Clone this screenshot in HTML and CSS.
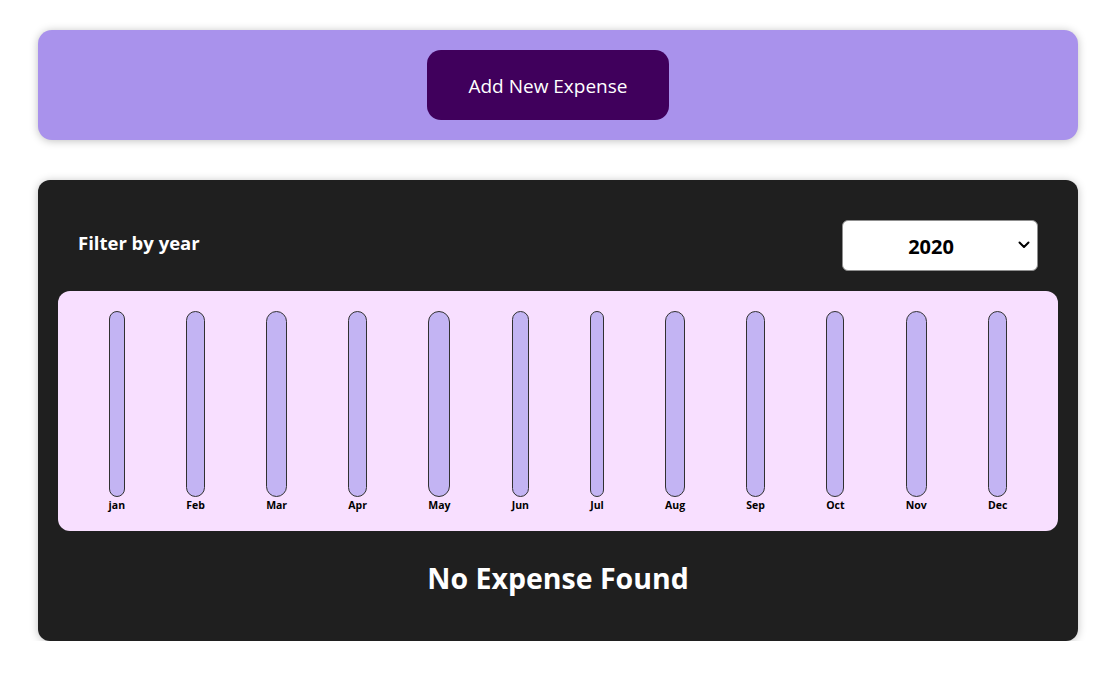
FILE: index.html
```html
<!DOCTYPE html>
<html lang="en">
<head>
<meta charset="utf-8">
<title>Expenses</title>
<link rel="stylesheet" href="styles.css">
</head>
<body>
<div class="app">
  <section class="new-expense">
    <button class="add-btn" type="button">Add New Expense</button>
  </section>

  <section class="expenses">
    <div class="filter">
      <label class="filter-label" for="year">Filter by year</label>
      <div class="select-wrap">
        <select id="year" class="year-select">
          <option>2020</option>
          <option>2021</option>
          <option>2022</option>
          <option>2023</option>
        </select>
        <svg class="chev" width="12" height="8" viewBox="0 0 12 8" aria-hidden="true"><path d="M1.5 1.5 L6 6 L10.5 1.5" fill="none" stroke="#000" stroke-width="2" stroke-linecap="round" stroke-linejoin="round"/></svg>
      </div>
    </div>

    <div class="chart">
      <div class="bar"><div class="bar-inner"></div><span class="bar-label">jan</span></div>
      <div class="bar"><div class="bar-inner"></div><span class="bar-label">Feb</span></div>
      <div class="bar"><div class="bar-inner"></div><span class="bar-label">Mar</span></div>
      <div class="bar"><div class="bar-inner"></div><span class="bar-label">Apr</span></div>
      <div class="bar"><div class="bar-inner"></div><span class="bar-label">May</span></div>
      <div class="bar"><div class="bar-inner"></div><span class="bar-label">Jun</span></div>
      <div class="bar"><div class="bar-inner"></div><span class="bar-label">Jul</span></div>
      <div class="bar"><div class="bar-inner"></div><span class="bar-label">Aug</span></div>
      <div class="bar"><div class="bar-inner"></div><span class="bar-label">Sep</span></div>
      <div class="bar"><div class="bar-inner"></div><span class="bar-label">Oct</span></div>
      <div class="bar"><div class="bar-inner"></div><span class="bar-label">Nov</span></div>
      <div class="bar"><div class="bar-inner"></div><span class="bar-label">Dec</span></div>
    </div>

    <h2 class="empty">No Expense Found</h2>
  </section>
</div>
</body>
</html>
```

FILE: styles.css
```css
* { box-sizing: border-box; }

html, body {
  margin: 0;
  padding: 0;
  background: #ffffff;
  font-family: "Open Sans", "Noto Sans", sans-serif;
}

.app {
  width: 1040px;
  margin: 30px 0 0 38px;
  display: flex;
  flex-direction: column;
  gap: 40px;
}

.new-expense {
  background: #a992ec;
  border-radius: 14px;
  padding: 20px 40px 20px 20px;
  display: flex;
  justify-content: center;
  box-shadow: 0 1px 8px rgba(0, 0, 0, 0.25);
}

.add-btn {
  width: 242px;
  height: 70px;
  border: none;
  border-radius: 14px;
  background: #40005c;
  color: #ffffff;
  font-family: inherit;
  font-size: 19px;
  padding-top: 2px;
  cursor: pointer;
}

.expenses {
  background: #1f1f1f;
  border-radius: 12px;
  padding: 20px;
  box-shadow: 0 1px 8px rgba(0, 0, 0, 0.25);
}

.filter {
  display: flex;
  justify-content: space-between;
  align-items: center;
  padding: 20px;
  height: 91px;
}

.filter-label {
  color: #ffffff;
  font-weight: 700;
  font-size: 18.5px;
  margin-top: -7px;
}

.select-wrap {
  position: relative;
  width: 196px;
  height: 51px;
}

.year-select {
  appearance: none;
  -webkit-appearance: none;
  width: 100%;
  height: 100%;
  background: #ffffff;
  border: 1px solid #8f8f8f;
  border-radius: 6px;
  font-family: inherit;
  font-weight: 700;
  font-size: 20px;
  color: #000;
  text-align: center;
  text-align-last: center;
  padding: 2px 18px 0 0;
}

.chev {
  position: absolute;
  right: 8px;
  top: 21px;
  pointer-events: none;
}

.chart {
  background: #f8dfff;
  border-radius: 12px;
  padding: 20px;
  height: 240px;
  display: flex;
  justify-content: space-around;
}

.bar {
  display: flex;
  flex-direction: column;
  align-items: stretch;
  height: 200px;
}

.bar-inner {
  flex: 1;
  background: #c3b4f3;
  border: 1px solid #313131;
  border-radius: 12px;
}

.bar-label {
  height: 14px;
  line-height: 16px;
  font-size: 10.5px;
  font-weight: 700;
  color: #000;
  text-align: center;
}

.empty {
  margin: 0;
  padding: 28px 0 24px;
  line-height: 38px;
  text-align: center;
  color: #ffffff;
  font-size: 28.5px;
  font-weight: 700;
}
```
